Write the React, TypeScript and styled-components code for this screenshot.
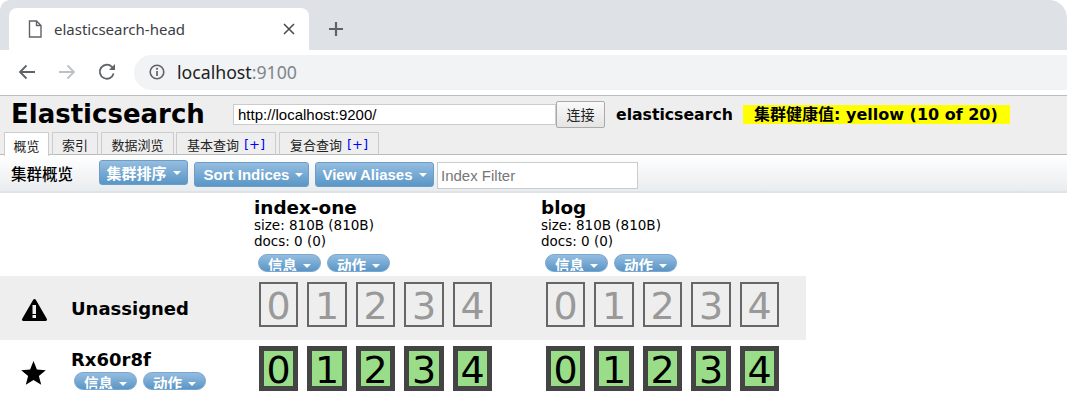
import React from 'react';
import styled, { createGlobalStyle } from 'styled-components';

const Global = createGlobalStyle`
  html, body { margin: 0; padding: 0; height: 402px; overflow: hidden; background: #fff; }
  body { font-family: "DejaVu Sans", "Noto Sans CJK SC", sans-serif; color: #000; }
  * { box-sizing: border-box; }
`;

const TabStrip = styled.div`
  height: 50px; background: #dee1e6; padding: 8px 0 0 9px; display: flex; align-items: stretch;
  border-top-left-radius: 10px; border-top-right-radius: 18px;
`;
const BrowserTab = styled.div`
  width: 300px; background: #fff; border-radius: 8px 8px 0 0; display: flex; align-items: center;
  padding: 0 14px 0 19px; font: 15px "Noto Sans", "Liberation Sans", sans-serif; color: #3c4043;
  svg { flex: none; }
`;
const TabTitle = styled.span`
  flex: 1; margin-left: 12px;
`;
const NewTab = styled.div`
  width: 54px; display: flex; align-items: center; justify-content: center;
`;
const NavBar = styled.div`
  height: 46px; display: flex; align-items: center; padding: 0 0 1px 0; border-bottom: 1px solid #bdbdbd; background: #fff;
`;
const NavIcon = styled.div`
  width: 40px; height: 24px; display: flex; align-items: center; justify-content: center;
`;
const NavIcons = styled.div`
  display: flex; padding-left: 7px; width: 134px;
`;
const Omnibox = styled.div`
  flex: 1; height: 35px; background: #f1f3f4; border-radius: 18px 0 0 18px; display: flex; align-items: center;
  padding-left: 15px; font: 17.7px "Noto Sans", "Liberation Sans", sans-serif; color: #202124;
`;
const Host = styled.span`margin-left: 12px;`;
const Port = styled.span`color: #80868b;`;

const Header = styled.div`
  height: 59px; background: #eee; border-bottom: 1px solid #bbb; position: relative;
`;
const TopRow = styled.div`
  display: flex; align-items: center; height: 36px; padding-left: 11px;
`;
const Title = styled.h1`
  margin: 0; width: 222px; font-size: 26px; font-weight: 700; line-height: 36px; font-family: "DejaVu Sans", sans-serif;
`;
const UrlInput = styled.input`
  width: 323px; height: 21px; border: 1px solid #ccc; background: #fff; padding: 0 4px; margin: 0;
  font: 15px "Liberation Sans", sans-serif; color: #000; outline: none;
`;
const Connect = styled.button`
  width: 49px; height: 27px; border: 1px solid #aaa; border-radius: 2px; margin: 0; padding: 0;
  background: linear-gradient(#f9f9f9, #e4e4e4); font: 14px "Noto Sans CJK SC", sans-serif; color: #222;
`;
const ClusterName = styled.span`
  margin-left: 11px; width: 127px; font-size: 15.7px; font-weight: 700;
`;
const Health = styled.span`
  width: 267px; height: 19px; background: #ff0; font-size: 16px; font-weight: 700; line-height: 19px; padding-left: 11px; white-space: nowrap;
`;
const Tabs = styled.div`
  display: flex; position: absolute; left: 4px; top: 36px; height: 23px;
`;
const TabItem = styled.div<{ $w: number; $active?: boolean; $gap?: number }>`
  width: ${p => p.$w}px; margin-right: ${p => p.$gap ?? 3}px; height: ${p => (p.$active ? 24 : 23)}px;
  border: 1px solid #ccc; border-bottom: ${p => (p.$active ? 'none' : '1px solid #bbb')};
  background: ${p => (p.$active ? '#fff' : '#eee')}; z-index: 1; padding-top: 1px;
  display: flex; align-items: center; justify-content: center; font: 13px "Noto Sans CJK SC", sans-serif; color: #222;
  white-space: pre;
`;
const Plus = styled.span`color: #00f; font-family: "DejaVu Sans", sans-serif; font-size: 13px; margin-left: 5px;`;

const Toolbar = styled.div`
  height: 38px; background: linear-gradient(#fff, #e9ecef); border-bottom: 2px solid #dfe2e6;
  display: flex; align-items: flex-start; padding: 5px 0 0 11px;
`;
const ToolbarTitle = styled.span`
  width: 88px; height: 27px; font: 500 15.5px/27px "Noto Sans CJK SC", sans-serif; color: #000;
`;
const MenuButton = styled.button<{ $w: number; $top: number; $pad: number }>`
  width: ${p => p.$w}px; height: 25px; margin: ${p => p.$top}px 6px 0 0; padding: 0 0 0 ${p => p.$pad}px; border: 1px solid #6d9dc5; border-radius: 3px;
  background: linear-gradient(#94bde0, #5a96c6); color: #fff; font: 700 15px "Liberation Sans", "Noto Sans CJK SC", sans-serif;
  display: flex; align-items: center; justify-content: center; gap: 6px; white-space: nowrap;
`;
const Caret = styled.i`
  width: 0; height: 0; border-left: 4px solid transparent; border-right: 4px solid transparent; border-top: 4px solid #fff; flex: none;
`;
const FilterInput = styled.input`
  width: 201px; height: 27px; margin: 2px 0 0 -3px; padding: 0 3px 1px; border: 1px solid #ccc; background: #fff; outline: none;
  font: 15px "Liberation Sans", sans-serif;
  &::placeholder { color: #777; opacity: 1; }
`;

const Grid = styled.div`
  display: grid; grid-template-columns: 254px 287px 265px; width: 806px;
`;
const Corner = styled.div`height: 83px;`;
const IndexHead = styled.div`
  height: 83px; font-size: 13.5px; line-height: 16px; padding-top: 4px; overflow: hidden;
`;
const IndexName = styled.div`
  font-size: 18.4px; font-weight: 700; line-height: 22px; margin-bottom: -2px; color: #000;
`;
const Pills = styled.div<{ $left: number }>`
  display: flex; gap: 6px; margin-left: ${p => p.$left}px;
`;
const Pill = styled.button`
  width: 63px; height: 18px; margin: 0; padding: 0; border: 1px solid #7aa6cf; border-radius: 9px; overflow: hidden;
  background: linear-gradient(#94bde0, #5a96c6); color: #fff; font: 700 14.5px/20px "Noto Sans CJK SC", sans-serif;
  display: flex; align-items: flex-start; justify-content: center; gap: 6px;
  i { margin-top: 9px; }
`;
const PillRow = styled.div`margin-top: 5px; margin-left: 4px;`;

const NodeCell = styled.div<{ $shade?: boolean }>`
  height: ${p => (p.$shade ? 64 : 62)}px; background: ${p => (p.$shade ? '#eee' : '#fff')};
  display: flex; align-items: ${p => (p.$shade ? 'center' : 'flex-start')};
`;
const NodeIcon = styled.div`
  width: 71px; flex: none; padding-left: 21px; display: flex; align-items: center; height: 100%; padding-top: 3px;
`;
const NodeName = styled.div<{ $drop?: boolean }>`
  font-size: 18px; font-weight: 700; line-height: 24px; margin-top: ${p => (p.$drop ? 2 : 0)}px;
`;
const NodeInfo = styled.div`padding-top: 8px;`;
const Shards = styled.div<{ $shade?: boolean }>`
  height: ${p => (p.$shade ? 64 : 62)}px; background: ${p => (p.$shade ? '#eee' : '#fff')};
  display: flex; gap: 9px; padding: 6px 0 0 4.75px;
`;
const Shard = styled.div<{ $on?: boolean }>`
  width: 39.5px; height: 45px; flex: none; text-align: center; font-size: 38px; line-height: ${p => (p.$on ? 39 : 45)}px;
  border: ${p => (p.$on ? '5px solid #444' : '2px solid #666')};
  background: ${p => (p.$on ? '#99dd88' : 'transparent')}; color: ${p => (p.$on ? '#000' : '#999')};
  font-family: "DejaVu Sans", sans-serif; overflow: hidden;
`;

const Menu = ({ w, top, pad = 0, children }: { w: number; top: number; pad?: number; children: React.ReactNode }) => (
  <MenuButton $w={w} $top={top} $pad={pad}>{children}<Caret /></MenuButton>
);
const ActionPills = ({ left = 0 }: { left?: number }) => (
  <Pills $left={left}>
    <Pill>信息<Caret /></Pill>
    <Pill>动作<Caret /></Pill>
  </Pills>
);
const ShardRow = ({ on, shade }: { on?: boolean; shade?: boolean }) => (
  <Shards $shade={shade}>
    {[0, 1, 2, 3, 4].map(n => <Shard key={n} $on={on}>{n}</Shard>)}
  </Shards>
);
const IndexColumn = ({ name }: { name: string }) => (
  <IndexHead>
    <IndexName>{name}</IndexName>
    <div>size: 810B (810B)</div>
    <div>docs: 0 (0)</div>
    <PillRow><ActionPills /></PillRow>
  </IndexHead>
);

export default function App() {
  return (
    <>
      <Global />
      <TabStrip>
        <BrowserTab>
          <svg width="14" height="18" viewBox="0 0 14 18" fill="none" stroke="#5f6368" strokeWidth="1.4">
            <path d="M1.5 1h7l4.5 4.5V17h-11.5zM8.5 1v4.5H13" />
          </svg>
          <TabTitle>elasticsearch-head</TabTitle>
          <svg width="12" height="12" viewBox="0 0 12 12" stroke="#45484c" strokeWidth="1.5">
            <path d="M1 1l10 10M11 1L1 11" />
          </svg>
        </BrowserTab>
        <NewTab>
          <svg width="16" height="16" viewBox="0 0 16 16" stroke="#5f6368" strokeWidth="2.2">
            <path d="M8 1v14M1 8h14" />
          </svg>
        </NewTab>
      </TabStrip>
      <NavBar>
        <NavIcons>
          <NavIcon>
            <svg width="18" height="16" viewBox="0 0 18 16" fill="none" stroke="#5f6368" strokeWidth="1.8">
              <path d="M17 8H2M8.5 1.5L2 8l6.5 6.5" />
            </svg>
          </NavIcon>
          <NavIcon>
            <svg width="18" height="16" viewBox="0 0 18 16" fill="none" stroke="#bdc1c6" strokeWidth="1.8">
              <path d="M1 8h15M9.5 1.5L16 8l-6.5 6.5" />
            </svg>
          </NavIcon>
          <NavIcon>
            <svg width="18" height="18" viewBox="0 0 18 18" fill="none">
              <path d="M15.6 10.5A7 7 0 1 1 13.9 3.9L16 6" stroke="#5f6368" strokeWidth="1.8" />
              <path d="M17 1v6h-6z" fill="#5f6368" />
            </svg>
          </NavIcon>
        </NavIcons>
        <Omnibox>
          <svg width="16" height="16" viewBox="0 0 16 16" fill="none">
            <circle cx="8" cy="8" r="6.8" stroke="#5f6368" strokeWidth="1.6" />
            <path d="M8 7v5" stroke="#5f6368" strokeWidth="1.7" />
            <circle cx="8" cy="4.8" r="1.1" fill="#5f6368" />
          </svg>
          <Host>localhost<Port>:9100</Port></Host>
        </Omnibox>
      </NavBar>
      <Header>
        <TopRow>
          <Title>Elasticsearch</Title>
          <UrlInput defaultValue="http://localhost:9200/" />
          <Connect>连接</Connect>
          <ClusterName>elasticsearch</ClusterName>
          <Health>集群健康值: yellow (10 of 20)</Health>
        </TopRow>
        <Tabs>
          <TabItem $w={45} $active>概览</TabItem>
          <TabItem $w={46}>索引</TabItem>
          <TabItem $w={73} $gap={2}>数据浏览</TabItem>
          <TabItem $w={100}>基本查询<Plus>[+]</Plus></TabItem>
          <TabItem $w={100}>复合查询<Plus>[+]</Plus></TabItem>
        </Tabs>
      </Header>
      <Toolbar>
        <ToolbarTitle>集群概览</ToolbarTitle>
        <Menu w={89} top={0}>集群排序</Menu>
        <Menu w={115} top={2} pad={4}>Sort Indices</Menu>
        <Menu w={119} top={2}>View Aliases</Menu>
        <FilterInput placeholder="Index Filter" />
      </Toolbar>
      <Grid>
        <Corner />
        <IndexColumn name="index-one" />
        <IndexColumn name="blog" />
        <NodeCell $shade>
          <NodeIcon>
            <svg width="27" height="24" viewBox="0 0 27 24">
              <path d="M13.5 2.5 24.5 21.5H2.5z" fill="#000" stroke="#000" strokeWidth="3" strokeLinejoin="round" />
              <rect x="11.5" y="7" width="3.5" height="9" fill="#eee" />
              <rect x="11.5" y="17" width="3.5" height="3" fill="#eee" />
            </svg>
          </NodeIcon>
          <NodeName $drop>Unassigned</NodeName>
        </NodeCell>
        <ShardRow shade />
        <ShardRow shade />
        <NodeCell>
          <NodeIcon>
            <svg width="25" height="24" viewBox="0 0 25 24" fill="#000">
              <path d="M12.5 0l3.4 8.6 8.9.6-6.9 5.7 2.3 8.9-7.7-4.9-7.7 4.9 2.3-8.9L.2 9.2l8.9-.6z" />
            </svg>
          </NodeIcon>
          <NodeInfo>
            <NodeName>Rx60r8f</NodeName>
            <ActionPills left={3} />
          </NodeInfo>
        </NodeCell>
        <ShardRow on />
        <ShardRow on />
      </Grid>
    </>
  );
}
